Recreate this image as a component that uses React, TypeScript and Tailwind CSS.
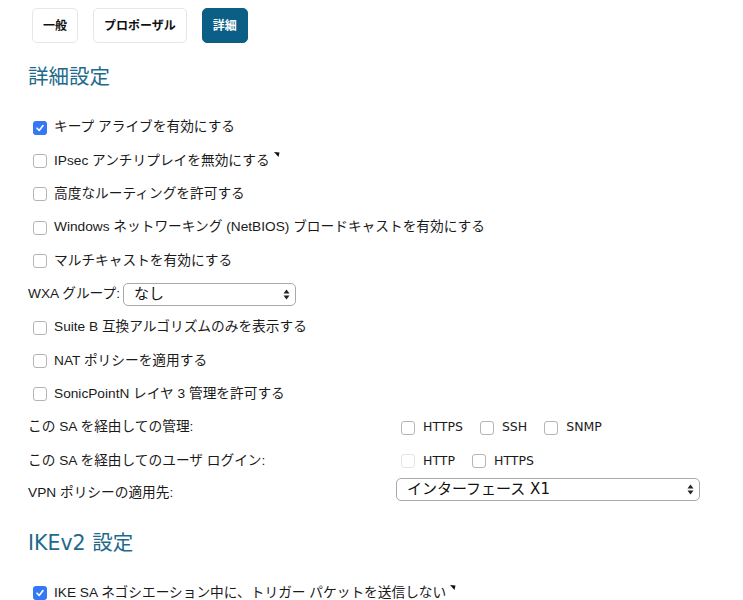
import { useState } from "react";

const bodyFont = "font-['Liberation_Sans','Noto_Sans_CJK_JP',sans-serif]";
const verdanaFont = "font-['DejaVu_Sans','Noto_Sans_CJK_JP',sans-serif]";

function Box({ checked, disabled }: { checked?: boolean; disabled?: boolean }) {
  if (checked) {
    return (
      <span className="flex h-[14px] w-[14px] shrink-0 items-center justify-center rounded-[3px] bg-[#3478f6]">
        <svg width="10" height="10" viewBox="0 0 10 10" fill="none">
          <path d="M2 5.2 L4.2 7.4 L8 2.6" stroke="white" strokeWidth="1.6" strokeLinecap="round" strokeLinejoin="round" />
        </svg>
      </span>
    );
  }
  return (
    <span
      className={
        disabled
          ? "block h-[14px] w-[14px] shrink-0 rounded-[3px] border border-[#e4e4e4] bg-white"
          : "block h-[14px] w-[14px] shrink-0 rounded-[3px] border border-[#b5b5b5] bg-white"
      }
    />
  );
}

function Marker() {
  return (
    <svg width="6" height="5" viewBox="0 0 6 5" className="-mt-[12px] ml-[4px] shrink-0">
      <polygon points="0,0 5.5,0.5 4.5,5" fill="#111" />
    </svg>
  );
}

function CheckRow({ label, checked, marker }: { label: string; checked?: boolean; marker?: boolean }) {
  return (
    <div className="flex h-[33.33px] items-center pl-[5px]">
      <Box checked={checked} />
      <span className="ml-[7px] text-[13.7px] text-[#1a1a1a]">{label}</span>
      {marker ? <Marker /> : null}
    </div>
  );
}

function Arrows() {
  return (
    <svg width="7" height="11" viewBox="0 0 7 11">
      <polygon points="3.5,0.5 6.5,4.5 0.5,4.5" fill="#222" />
      <polygon points="0.5,6.5 6.5,6.5 3.5,10.5" fill="#222" />
    </svg>
  );
}

function Select({ value, width }: { value: string; width: string }) {
  return (
    <div
      className={`flex h-[23px] items-center justify-between rounded-[5px] border border-[#a9a9a9] bg-white pl-[10px] pr-[5px] ${width}`}
    >
      <span className={`${verdanaFont} text-[15px] leading-[20px] text-[#111]`}>{value}</span>
      <Arrows />
    </div>
  );
}

function Tab({ label, active, onClick }: { label: string; active?: boolean; onClick: () => void }) {
  return (
    <button
      onClick={onClick}
      className={
        active
          ? "h-[35px] rounded-[5px] border border-[#0b5f86] bg-[#0b5f86] px-[10px] text-[12px] font-bold text-white"
          : "h-[35px] rounded-[5px] border border-[#e6e6e6] bg-white px-[10px] text-[12px] font-bold text-[#111]"
      }
    >
      {label}
    </button>
  );
}

function Opt({ label, disabled, first }: { label: string; disabled?: boolean; first?: boolean }) {
  return (
    <div className={first ? "flex items-center" : "ml-[17px] flex items-center"}>
      <Box disabled={disabled} />
      <span className="ml-[8px]">{label}</span>
    </div>
  );
}

export default function App() {
  const [tab, setTab] = useState("詳細");
  const tabs = ["一般", "プロポーザル", "詳細"];

  return (
    <div className={`${bodyFont} min-h-[600px] bg-white pl-[28px] text-[#1a1a1a]`}>
      <div className="flex gap-[15px] pl-[4px] pt-[8px]">
        {tabs.map((t) => (
          <Tab key={t} label={t} active={tab === t} onClick={() => setTab(t)} />
        ))}
      </div>

      <h2 className={`${verdanaFont} mb-[20px] mt-[20px] h-[28px] text-[20.5px] leading-[28px] text-[#1d6a8c]`}>詳細設定</h2>

      <CheckRow label="キープ アライブを有効にする" checked />
      <CheckRow label="IPsec アンチリプレイを無効にする" marker />
      <CheckRow label="高度なルーティングを許可する" />
      <CheckRow label="Windows ネットワーキング (NetBIOS) ブロードキャストを有効にする" />
      <CheckRow label="マルチキャストを有効にする" />

      <div className="flex h-[33.33px] items-center">
        <span className="text-[13.7px]">WXA グループ:</span>
        <div className="ml-[3px]">
          <Select value="なし" width="w-[173px]" />
        </div>
      </div>

      <CheckRow label="Suite B 互換アルゴリズムのみを表示する" />
      <CheckRow label="NAT ポリシーを適用する" />
      <CheckRow label="SonicPointN レイヤ 3 管理を許可する" />

      <div className="grid grid-cols-[368px_1fr]">
        <div className="flex h-[33.33px] items-center text-[13.7px]">この SA を経由しての管理:</div>
        <div className={`${verdanaFont} flex h-[33.33px] items-center pl-[5px] text-[12.5px]`}>
          <Opt label="HTTPS" first />
          <Opt label="SSH" />
          <Opt label="SNMP" />
        </div>

        <div className="flex h-[33.33px] items-center text-[13.7px]">この SA を経由してのユーザ ログイン:</div>
        <div className={`${verdanaFont} flex h-[33.33px] items-center pl-[5px] text-[12.5px]`}>
          <Opt label="HTTP" first disabled />
          <Opt label="HTTPS" />
        </div>

        <div className="flex h-[28px] items-center pt-[3px] text-[13.7px]">VPN ポリシーの適用先:</div>
        <div className="flex h-[28px] items-start">
          <Select value="インターフェース X1" width="w-[304px]" />
        </div>
      </div>

      <h2 className={`${verdanaFont} mb-[20px] mt-[23px] h-[28px] text-[20.5px] leading-[28px] text-[#1d6a8c]`}>IKEv2 設定</h2>

      <CheckRow label="IKE SA ネゴシエーション中に、トリガー パケットを送信しない" checked marker />
    </div>
  );
}
